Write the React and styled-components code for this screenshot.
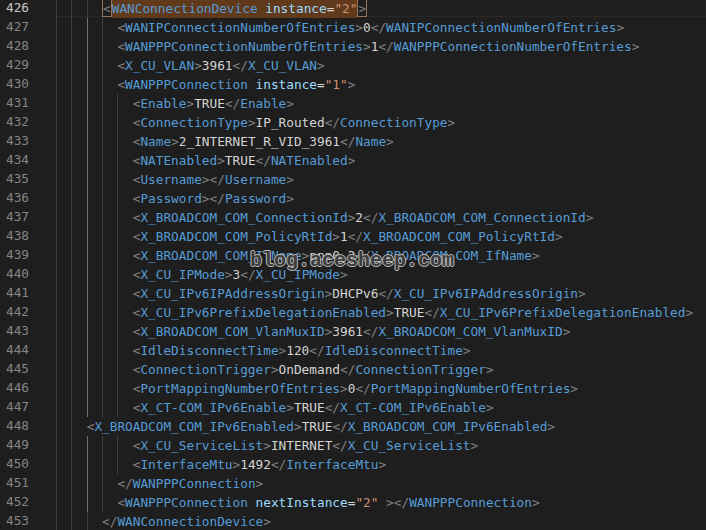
import styled, { createGlobalStyle } from "styled-components";

const GlobalStyle = createGlobalStyle`
    html, body {
        margin: 0;
        padding: 0;
        background-color: #1e1e1e;
        overflow: hidden;
    }
`

const Editor = styled.div`
    width: 706px;
    height: 530px;
    overflow: hidden;
    position: relative;
    background-color: #1e1e1e;
    font-family: "DejaVu Sans Mono", "Liberation Mono", monospace;
    font-size: 12.76px;
`

// the view is scrolled a couple of pixels past line 426
const Lines = styled.div`
    margin-top: -2px;
    display: flex;
    flex-direction: column;
`

const Row = styled.div`
    display: flex;
    height: 19px;
    line-height: 19px;
`

const LineNumber = styled.div`
    width: 56px;
    flex: none;
    box-sizing: border-box;
    padding-right: 27px;
    text-align: right;
    color: ${({ $active }) => $active ? '#c6c6c6' : '#858585'};
`

const Code = styled.div`
    flex: 1;
    display: flex;
    white-space: pre;
    box-sizing: border-box;
    border: 1px solid ${({ $current }) => $current ? '#282828' : 'transparent'};
    border-left: none;
    margin-top: ${({ $current }) => $current ? '0' : '0'};
`

const Indent = styled.span`
    display: inline-block;
    width: 2ch;
    height: 19px;
    flex: none;
    box-sizing: border-box;
    border-left: 1px solid ${({ $active }) => $active ? '#707070' : '#404040'};
`

const Token = styled.span`
    color: ${({ $kind }) => ({
        punct: '#808080',
        tag: '#569cd6',
        attr: '#9cdcfe',
        eq: '#d4d4d4',
        value: '#ce9178',
        text: '#d4d4d4',
    })[$kind]};
`

const BracketBox = styled.span`
    display: inline-block;
    height: 19px;
    box-sizing: border-box;
    border: 1px solid #9a7352;
    margin-top: -1px;
`

const MatchRange = styled.span`
    display: inline-block;
    height: 19px;
    background-color: #613a1c;
    margin-top: -1px;
`

const Watermark = styled.div`
    position: absolute;
    left: 250px;
    top: 249px;
    font-family: "Liberation Mono", "DejaVu Sans Mono", monospace;
    font-size: 20px;
    font-weight: 700;
    color: #3c3c3c;
    text-shadow: 1px 0 #b8b8b8, -1px 0 #b8b8b8, 0 1px #b8b8b8, 0 -1px #b8b8b8;
    pointer-events: none;
`

const source = [
    [426, 6, '<WANConnectionDevice instance="2">', true],
    [427, 8, '<WANIPConnectionNumberOfEntries>0</WANIPConnectionNumberOfEntries>'],
    [428, 8, '<WANPPPConnectionNumberOfEntries>1</WANPPPConnectionNumberOfEntries>'],
    [429, 8, '<X_CU_VLAN>3961</X_CU_VLAN>'],
    [430, 8, '<WANPPPConnection instance="1">'],
    [431, 10, '<Enable>TRUE</Enable>'],
    [432, 10, '<ConnectionType>IP_Routed</ConnectionType>'],
    [433, 10, '<Name>2_INTERNET_R_VID_3961</Name>'],
    [434, 10, '<NATEnabled>TRUE</NATEnabled>'],
    [435, 10, '<Username></Username>'],
    [436, 10, '<Password></Password>'],
    [437, 10, '<X_BROADCOM_COM_ConnectionId>2</X_BROADCOM_COM_ConnectionId>'],
    [438, 10, '<X_BROADCOM_COM_PolicyRtId>1</X_BROADCOM_COM_PolicyRtId>'],
    [439, 10, '<X_BROADCOM_COM_IfName>ppp0.2</X_BROADCOM_COM_IfName>'],
    [440, 10, '<X_CU_IPMode>3</X_CU_IPMode>'],
    [441, 10, '<X_CU_IPv6IPAddressOrigin>DHCPv6</X_CU_IPv6IPAddressOrigin>'],
    [442, 10, '<X_CU_IPv6PrefixDelegationEnabled>TRUE</X_CU_IPv6PrefixDelegationEnabled>'],
    [443, 10, '<X_BROADCOM_COM_VlanMuxID>3961</X_BROADCOM_COM_VlanMuxID>'],
    [444, 10, '<IdleDisconnectTime>120</IdleDisconnectTime>'],
    [445, 10, '<ConnectionTrigger>OnDemand</ConnectionTrigger>'],
    [446, 10, '<PortMappingNumberOfEntries>0</PortMappingNumberOfEntries>'],
    [447, 10, '<X_CT-COM_IPv6Enable>TRUE</X_CT-COM_IPv6Enable>'],
    [448, 4, '<X_BROADCOM_COM_IPv6Enabled>TRUE</X_BROADCOM_COM_IPv6Enabled>'],
    [449, 10, '<X_CU_ServiceList>INTERNET</X_CU_ServiceList>'],
    [450, 10, '<InterfaceMtu>1492</InterfaceMtu>'],
    [451, 8, '</WANPPPConnection>'],
    [452, 8, '<WANPPPConnection nextInstance="2" ></WANPPPConnection>'],
    [453, 6, '</WANConnectionDevice>'],
]

function tokenize(s) {
    const out = []
    let i = 0
    let inTag = false
    while (i < s.length) {
        const rest = s.slice(i)
        let m
        if (!inTag) {
            if (rest[0] === '<') {
                m = rest.match(/^<\/?/)[0]
                out.push(['punct', m])
                i += m.length
                const name = s.slice(i).match(/^[\w-]+/)[0]
                out.push(['tag', name])
                i += name.length
                inTag = true
            } else {
                m = rest.match(/^[^<]+/)[0]
                out.push(['text', m])
                i += m.length
            }
        } else if ((m = rest.match(/^\s+/))) {
            out.push(['text', m[0]])
            i += m[0].length
        } else if (rest[0] === '>') {
            out.push(['punct', '>'])
            i += 1
            inTag = false
        } else {
            m = rest.match(/^([\w-]+)(=)("[^"]*")/)
            out.push(['attr', m[1]], ['eq', m[2]], ['value', m[3]])
            i += m[0].length
        }
    }
    return out
}

function renderTokens(tokens) {
    return tokens.map(([kind, value], i) => <Token key={i} $kind={kind}>{value}</Token>)
}

function CodeLine({ line, indent, text, current }) {
    const tokens = tokenize(text)
    const guides = []
    for (let col = 0; col < indent; col += 2) {
        guides.push(<Indent key={col} $active={col === 4 && line > 426 && line < 453} />)
    }
    let body
    if (current) {
        body = (
            <>
                <BracketBox>{renderTokens(tokens.slice(0, 1))}</BracketBox>
                <MatchRange>{renderTokens(tokens.slice(1, -1))}</MatchRange>
                <BracketBox>{renderTokens(tokens.slice(-1))}</BracketBox>
            </>
        )
    } else {
        body = renderTokens(tokens)
    }
    return (
        <Row>
            <LineNumber $active={current}>{line}</LineNumber>
            <Code $current={current}>
                {guides}
                <span>{body}</span>
            </Code>
        </Row>
    )
}

export default function App() {
    return (
        <Editor>
            <GlobalStyle />
            <Lines>
                {source.map(([line, indent, text, current]) => (
                    <CodeLine key={line} line={line} indent={indent} text={text} current={!!current} />
                ))}
            </Lines>
            <Watermark>blog.acesheep.com</Watermark>
        </Editor>
    )
}
